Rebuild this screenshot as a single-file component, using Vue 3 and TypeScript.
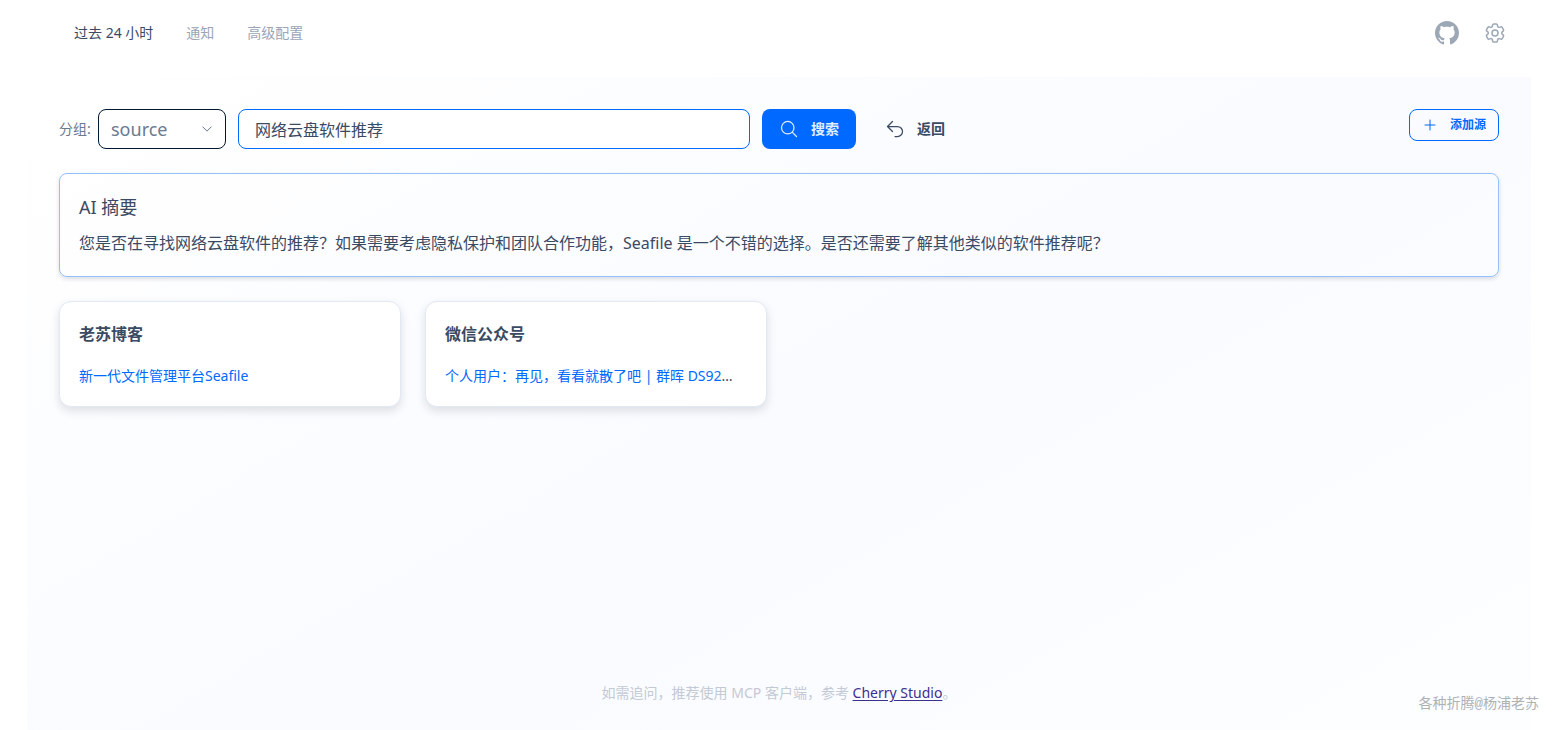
<script setup lang="ts">
import { ref } from 'vue'

interface Article {
  title: string
  shortened: boolean
}

interface Source {
  name: string
  items: Article[]
}

const tabs: string[] = ['过去 24 小时', '通知', '高级配置']
const activeTab = ref<number>(0)
const group = ref<string>('source')
const keyword = ref<string>('网络云盘软件推荐')
const sources: Source[] = [
  { name: '老苏博客', items: [{ title: '新一代文件管理平台Seafile', shortened: false }] },
  { name: '微信公众号', items: [{ title: '个人用户：再见，看看就散了吧 | 群晖 DS92', shortened: true }] },
]
</script>

<template>
  <div class="page" lang="zh-CN">
    <header class="topbar">
      <nav class="tabs">
        <a
          v-for="(tab, i) in tabs"
          :key="tab"
          href="#"
          class="tab"
          :class="{ active: i === activeTab }"
          @click.prevent="activeTab = i"
        >{{ tab }}</a>
      </nav>
      <div class="tools">
        <a href="#" class="tool" aria-label="GitHub">
          <svg viewBox="0 0 16 16" fill="currentColor">
            <path d="M8 0C3.58 0 0 3.58 0 8c0 3.54 2.29 6.53 5.47 7.59.4.07.55-.17.55-.38 0-.19-.01-.82-.01-1.49-2.01.37-2.53-.49-2.69-.94-.09-.23-.48-.94-.82-1.13-.28-.15-.68-.52-.01-.53.63-.01 1.08.58 1.23.82.72 1.21 1.87.87 2.33.66.07-.52.28-.87.51-1.07-1.78-.2-3.64-.89-3.64-3.95 0-.87.31-1.59.82-2.15-.08-.2-.36-1.02.08-2.12 0 0 .67-.21 2.2.82.64-.18 1.32-.27 2-.27s1.36.09 2 .27c1.53-1.04 2.2-.82 2.2-.82.44 1.1.16 1.92.08 2.12.51.56.82 1.27.82 2.15 0 3.07-1.87 3.75-3.65 3.95.29.25.54.73.54 1.48 0 1.07-.01 1.93-.01 2.2 0 .21.15.46.55.38A8.01 8.01 0 0 0 16 8c0-4.42-3.58-8-8-8z" />
          </svg>
        </a>
        <button type="button" class="tool" aria-label="设置">
          <svg viewBox="0 0 24 24" fill="none" stroke="currentColor" stroke-width="1.5" stroke-linecap="round" stroke-linejoin="round">
            <path d="M9.594 3.94c.09-.542.56-.94 1.11-.94h2.593c.55 0 1.02.398 1.11.94l.213 1.281c.063.374.313.686.645.87.074.04.147.083.22.127.325.196.72.257 1.075.124l1.217-.456a1.125 1.125 0 0 1 1.37.49l1.296 2.247a1.125 1.125 0 0 1-.26 1.431l-1.003.827c-.293.241-.438.613-.43.992a7.723 7.723 0 0 1 0 .255c-.008.378.137.75.43.991l1.004.827c.424.35.534.955.26 1.43l-1.298 2.247a1.125 1.125 0 0 1-1.369.491l-1.217-.456c-.355-.133-.75-.072-1.076.124a6.47 6.47 0 0 1-.22.128c-.331.183-.581.495-.644.869l-.213 1.281c-.09.543-.56.94-1.11.94h-2.594c-.55 0-1.019-.398-1.11-.94l-.213-1.281c-.062-.374-.312-.686-.644-.87a6.52 6.52 0 0 1-.22-.127c-.325-.196-.72-.257-1.076-.124l-1.217.456a1.125 1.125 0 0 1-1.369-.49l-1.297-2.247a1.125 1.125 0 0 1 .26-1.431l1.004-.827c.292-.24.437-.613.43-.991a6.932 6.932 0 0 1 0-.255c.007-.38-.138-.751-.43-.992l-1.004-.827a1.125 1.125 0 0 1-.26-1.43l1.297-2.247a1.125 1.125 0 0 1 1.37-.491l1.216.456c.356.133.751.072 1.076-.124.072-.044.146-.086.22-.128.332-.183.582-.495.644-.869l.214-1.28Z" />
            <path d="M15 12a3 3 0 1 1-6 0 3 3 0 0 1 6 0Z" />
          </svg>
        </button>
      </div>
    </header>

    <main class="panel">
      <form class="search" @submit.prevent>
        <label class="group-label" for="group">分组:</label>
        <div class="select-wrap">
          <select id="group" v-model="group">
            <option value="source">source</option>
          </select>
          <svg class="chevron" viewBox="0 0 24 24" fill="none" stroke="currentColor" stroke-width="2" stroke-linecap="round" stroke-linejoin="round">
            <path d="m20.5 7.75-8.5 8.5-8.5-8.5" />
          </svg>
        </div>
        <input v-model="keyword" class="keyword" type="text" aria-label="搜索关键词" />
        <button type="submit" class="btn primary">
          <svg viewBox="0 0 24 24" fill="none" stroke="currentColor" stroke-width="1.5" stroke-linecap="round" stroke-linejoin="round">
            <path d="m21 21-5.197-5.197m0 0A7.5 7.5 0 1 0 5.196 5.196a7.5 7.5 0 0 0 10.607 10.607Z" />
          </svg>
          搜索
        </button>
        <button type="button" class="btn">
          <svg viewBox="0 0 24 24" fill="none" stroke="currentColor" stroke-width="1.5" stroke-linecap="round" stroke-linejoin="round">
            <path d="M9 15 3 9m0 0 6-6M3 9h12a6 6 0 0 1 0 12h-3" />
          </svg>
          返回
        </button>
        <button type="button" class="btn add">
          <svg viewBox="0 0 24 24" fill="none" stroke="currentColor" stroke-width="1.5" stroke-linecap="round">
            <path d="M12 4.5v15m7.5-7.5h-15" />
          </svg>
          添加源
        </button>
      </form>

      <section class="summary">
        <h2>AI 摘要</h2>
        <p>您是否在寻找网络云盘软件的推荐？如果需要考虑隐私保护和团队合作功能，Seafile 是一个不错的选择。是否还需要了解其他类似的软件推荐呢？</p>
      </section>

      <div class="cards">
        <section v-for="source in sources" :key="source.name" class="card">
          <h3>{{ source.name }}</h3>
          <ul>
            <li v-for="item in source.items" :key="item.title">
              <a href="#">{{ item.title }}</a><span v-if="item.shortened">…</span>
            </li>
          </ul>
        </section>
      </div>

      <footer class="footer">
        如需追问，推荐使用 MCP 客户端，参考 <a href="#">Cherry Studio</a>。
      </footer>
    </main>
    <div class="watermark">各种折腾@杨浦老苏</div>
  </div>
</template>

<style>
body {
  margin: 0;
  background: #fff;
}
</style>

<style scoped>
.page,
.page * {
  box-sizing: border-box;
}
.page {
  position: relative;
  display: flex;
  flex-direction: column;
  min-height: 100vh;
  padding: 0 29px 0 27px;
  font-family: "Noto Sans", "Noto Sans CJK SC", sans-serif;
  font-size: 14px;
  line-height: 20px;
  color: #3b4a63;
}
button,
input,
select {
  margin: 0;
  font: inherit;
  color: inherit;
}
button {
  cursor: pointer;
}
.topbar {
  display: flex;
  align-items: center;
  justify-content: space-between;
  height: 66px;
  margin-bottom: 11px;
  padding: 0 24px 0 47px;
}
.tabs {
  display: flex;
  gap: 33px;
}
.tab {
  color: #9ba5b5;
  text-decoration: none;
}
.tab.active {
  color: #3b4a63;
}
.tools {
  display: flex;
  gap: 24px;
}
.tool {
  display: block;
  width: 24px;
  height: 24px;
  padding: 0;
  border: 0;
  background: none;
  color: #9ca8b6;
}
.tool svg {
  display: block;
  width: 24px;
  height: 24px;
}
.panel {
  flex: 1;
  display: flex;
  flex-direction: column;
  padding: 32px 32px 27px;
  background: linear-gradient(150deg, #fff 0%, #f9fbff 50%, #fafbff 60%, #fdfeff 100%);
}
.search {
  display: flex;
  align-items: center;
  gap: 12px;
  margin-bottom: 24px;
}
.group-label {
  width: 27px;
  white-space: nowrap;
  color: #6b7a90;
}
.select-wrap {
  position: relative;
  width: 128px;
}
select {
  display: block;
  width: 100%;
  height: 40px;
  padding: 0 32px 0 12px;
  border: 1px solid #001731;
  border-radius: 8px;
  background: #fff;
  font-size: 18px;
  color: #6b7a90;
  appearance: none;
}
.chevron {
  position: absolute;
  top: 14px;
  right: 13px;
  width: 12px;
  height: 12px;
  color: #64748b;
  pointer-events: none;
}
.keyword {
  flex: 0 1 512px;
  min-width: 0;
  height: 40px;
  padding: 0 16px;
  border: 1px solid #0069ff;
  border-radius: 8px;
  background: #fff;
  font-size: 16px;
  outline: none;
}
.btn {
  display: flex;
  align-items: center;
  gap: 12px;
  height: 40px;
  padding: 0 17px;
  border: 0;
  border-radius: 8px;
  background: none;
  font-weight: 600;
  white-space: nowrap;
}
.btn svg {
  width: 20px;
  height: 20px;
}
.primary {
  background: #0069ff;
  color: #e0edff;
}
.add {
  align-self: flex-start;
  height: 32px;
  margin-left: auto;
  padding: 0 12px;
  border: 1px solid #0069ff;
  color: #0069ff;
  font-size: 12px;
}
.add svg {
  width: 16px;
  height: 16px;
}
h2,
h3,
p,
ul {
  margin: 0;
  padding: 0;
}
.summary {
  margin-bottom: 24px;
  padding: 19px;
  border: 1px solid #93c0ff;
  border-radius: 8px;
  box-shadow: 0 2px 4px rgba(15, 23, 42, 0.14);
}
h2 {
  margin-bottom: 8px;
  font-size: 18px;
  line-height: 28px;
  font-weight: 400;
}
.summary p {
  font-size: 16px;
  line-height: 28px;
}
.cards {
  display: grid;
  grid-template-columns: repeat(4, minmax(0, 1fr));
  gap: 24px;
}
.card {
  padding: 20px 19px;
  border: 1px solid #e2e8f4;
  border-radius: 12px;
  background: #fff;
  box-shadow: 0 4px 10px rgba(15, 23, 42, 0.13);
}
h3 {
  margin-bottom: 20px;
  font-size: 16px;
  line-height: 24px;
  font-weight: 600;
}
ul {
  list-style: none;
}
li {
  overflow: hidden;
  text-overflow: ellipsis;
  white-space: nowrap;
}
li a {
  color: #0069ff;
  text-decoration: none;
}
.footer {
  margin-top: auto;
  text-align: center;
  color: #c3cad5;
}
.footer a {
  color: #3b2f8f;
  text-underline-offset: 2px;
}
.watermark {
  position: absolute;
  right: 21px;
  bottom: 16px;
  font-family: "Liberation Mono", "Noto Sans CJK SC", monospace;
  color: #afb1b4;
}
</style>
